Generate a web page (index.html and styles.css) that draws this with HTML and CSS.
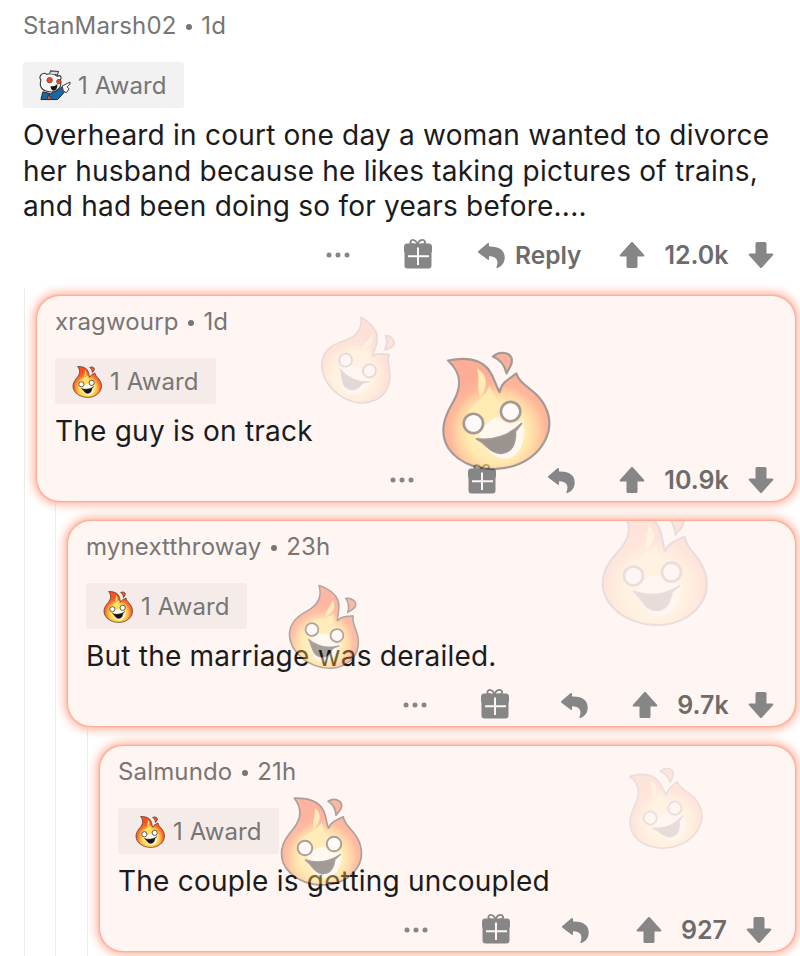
FILE: index.html
```html
<!DOCTYPE html>
<html lang="en">
<head>
<meta charset="utf-8">
<title>Comments</title>
<link rel="stylesheet" href="styles.css">
</head>
<body>
<svg class="defs" width="0" height="0" aria-hidden="true">
  <defs>
    <radialGradient id="fire" gradientUnits="userSpaceOnUse" cx="125" cy="185" r="135">
      <stop offset="0" stop-color="#fff6c0"/>
      <stop offset=".5" stop-color="#ffdc58"/>
      <stop offset=".68" stop-color="#ffa63c"/>
      <stop offset=".8" stop-color="#ff6a2c"/>
      <stop offset="1" stop-color="#fb5120"/>
    </radialGradient>
    <g id="flame">
      <path d="M43 4C82 3 117 13 131 42C141 63 139 78 146 95C153 76 170 70 191 60C193 82 214 95 230 119C251 151 251 189 233 215C211 250 170 268 128 267C78 267 28 243 9 200C-6 159 14 127 38 99C63 69 70 39 43 4Z" fill="url(#fire)" stroke="#2b211c" stroke-width="5" stroke-linejoin="round"/>
      <path d="M105 34C128 52 122 78 101 98C96 76 107 58 105 34ZM59 139C78 105 116 103 126 75C130 102 141 113 149 130L123 172Z" fill="#ffdf62"/>
      <path d="M84 178Q118 146 134 151Q150 181 188 166Q187 234 143 247Q95 248 84 178Z" fill="#fffdf0"/>
      <path d="M145 13C163 2 188 10 186 29C184 42 174 47 169 56C168 37 161 23 145 13Z" fill="#fa5a30" stroke="#2b211c" stroke-width="5" stroke-linejoin="round"/>
      <circle cx="75" cy="155" r="22" fill="#fff" stroke="#2b211c" stroke-width="6"/>
      <circle cx="163" cy="143" r="22" fill="#fff" stroke="#2b211c" stroke-width="6"/>
      <path d="M76 191C112 202 151 197 183 174L166 189C162 214 154 234 126 233C101 230 94 202 76 191Z" fill="#171310" stroke="#2b211c" stroke-width="4" stroke-linejoin="round"/>
    </g>
    <symbol id="dots" viewBox="0 0 24 6"><circle cx="3" cy="3" r="2.5"/><circle cx="12" cy="3" r="2.5"/><circle cx="21" cy="3" r="2.5"/></symbol>
    <symbol id="gift" viewBox="0 0 30 32">
      <path d="M14.500 7C9 7 6.500 5.800 7.500 3.500C9 .8 13.500 1.500 14.500 7C15.500 1.500 20.500 .8 22 3.500C23 5.800 20 7 14.500 7Z" fill="none" stroke="currentColor" stroke-width="1.700"/>
      <path d="M4 5.500H26Q29 5.500 29 9V12.500Q29 14 28.500 15V27.500Q28.500 30.500 25.500 30.500H4.500Q1.500 30.500 1.500 27.500V15Q1 14 1 12.500V9Q1 5.500 4 5.500Z"/>
      <path d="M15 9.500V27M5 18.300H26" stroke="var(--surface)" stroke-width="2"/>
    </symbol>
    <symbol id="reply" viewBox="0 0 29 27"><path d="M1.400 9.100L10.500 1.300Q12 .3 12 2.100V4.600C23 4.300 28 9 27.700 16C27.500 21 24.500 24.500 20.500 26C19.700 26.300 19.200 25.800 19.500 25C22 18.500 19.500 14.300 12 14.300V16.800Q12 18.700 10.500 17.600L1.400 10.700Q.5 9.900 1.400 9.100Z"/></symbol>
    <symbol id="up" viewBox="0 0 26 28"><path d="M12.200 1.300Q13 .5 13.800 1.300L25 13.700Q26 15.500 24 15.500H18.500V25.500Q18.500 27 17 27H9Q7.500 27 7.500 25.500V15.500H2Q0 15.500 1 13.700Z"/></symbol>
  </defs>
</svg>

<main class="thread">
  <article class="comment root">
    <header class="meta">StanMarsh02 <i class="sep"></i> 1d</header>
    <div class="award">
      <svg class="award-icon" viewBox="0 0 34 32">
        <path d="M3 31L5 23L13 25L22 20L26 17L29 21L24 27L20 31Z" fill="#1769a9" stroke="#252423"/>
        <path d="M9 30.500L11 26L14 30" fill="#e7552a" stroke="#252423" stroke-width=".8"/>
        <path d="M9 5C5 2 0 7 3 11C1 18 4 22 12 23C20 24 25 18 23 11C25 8 23 5 20 7Q15 3 9 5Z" fill="#f8f6f4" stroke="#353535" stroke-width="1.100"/>
        <path d="M12 4L13 1.500L21 2L20 6L17 5" fill="#ddd" stroke="#454545" stroke-width="1.100"/>
        <circle cx="12" cy="11" r="2.800" fill="#ec4a20" stroke="#6a4034" stroke-width=".8"/>
        <circle cx="21.500" cy="12.500" r="2.300" fill="#ec4a20" stroke="#6a4034" stroke-width=".8"/>
        <path d="M13 17Q17 18 20 15Q20 22 16 22Q13 21 13 17Z" fill="#181818"/>
        <path d="M25 17L33 13L33 15L30 18L32 20L29 24L26 22Z" fill="#fff" stroke="#353535"/>
      </svg>
      <span>1 Award</span>
    </div>
    <p class="text">Overheard in court one day a woman wanted to divorce<br>her husband because he likes taking pictures of trains,<br>and had been doing so for years before....</p>
    <footer class="actions">
      <svg class="dots"><use href="#dots"/></svg>
      <svg class="gift"><use href="#gift"/></svg>
      <span class="reply"><svg class="reply-icon"><use href="#reply"/></svg><span class="reply-label">Reply</span></span>
      <span class="votes"><svg class="arrow"><use href="#up"/></svg><b>12.0k</b><svg class="arrow down"><use href="#up"/></svg></span>
    </footer>
  </article>

  <div class="replies">
    <article class="comment glow">
      <header class="meta">xragwourp <i class="sep"></i> 1d</header>
      <div class="award"><svg class="award-icon fire" viewBox="-3 0 252 272"><use href="#flame"/></svg><span>1 Award</span></div>
      <p class="text">The guy is on track</p>
      <footer class="actions">
        <svg class="dots"><use href="#dots"/></svg>
        <svg class="gift"><use href="#gift"/></svg>
        <span class="reply"><svg class="reply-icon"><use href="#reply"/></svg></span>
        <span class="votes"><svg class="arrow"><use href="#up"/></svg><b>10.9k</b><svg class="arrow down"><use href="#up"/></svg></span>
      </footer>
      <svg class="flames">
        <use href="#flame" opacity=".12" transform="translate(320.500 69.500) rotate(32) scale(.295) translate(-119 -149)"/>
        <use href="#flame" opacity=".43" transform="translate(455 121.500) rotate(-10) scale(.44) translate(-119 -149)"/>
      </svg>
    </article>

    <div class="replies">
      <article class="comment glow">
        <header class="meta">mynextthroway <i class="sep"></i> 23h</header>
        <div class="award"><svg class="award-icon fire" viewBox="-3 0 252 272"><use href="#flame"/></svg><span>1 Award</span></div>
        <p class="text">But the marriage was derailed.</p>
        <footer class="actions">
          <svg class="dots"><use href="#dots"/></svg>
          <svg class="gift"><use href="#gift"/></svg>
          <span class="reply"><svg class="reply-icon"><use href="#reply"/></svg></span>
          <span class="votes"><svg class="arrow"><use href="#up"/></svg><b class="short">9.7k</b><svg class="arrow down"><use href="#up"/></svg></span>
        </footer>
        <svg class="flames">
          <use href="#flame" opacity=".38" transform="translate(256.500 111.500) rotate(21) scale(.29) translate(-119 -149)"/>
          <use href="#flame" opacity=".1" transform="translate(584.500 53) rotate(2) scale(.43) translate(-119 -149)"/>
        </svg>
      </article>

      <div class="replies">
        <article class="comment glow">
          <header class="meta">Salmundo <i class="sep"></i> 21h</header>
          <div class="award"><svg class="award-icon fire" viewBox="-3 0 252 272"><use href="#flame"/></svg><span>1 Award</span></div>
          <p class="text">The couple is getting uncoupled</p>
          <footer class="actions last">
            <svg class="dots"><use href="#dots"/></svg>
            <svg class="gift"><use href="#gift"/></svg>
            <span class="reply"><svg class="reply-icon"><use href="#reply"/></svg></span>
            <span class="votes"><svg class="arrow"><use href="#up"/></svg><b class="shorter">927</b><svg class="arrow down"><use href="#up"/></svg></span>
          </footer>
          <svg class="flames">
            <use href="#flame" opacity=".4" transform="translate(219.500 100) scale(.33) translate(-119 -149)"/>
            <use href="#flame" opacity=".1" transform="translate(562.500 67) rotate(-14) scale(.3) translate(-119 -149)"/>
          </svg>
        </article>
      </div>
    </div>
  </div>
</main>
</body>
</html>
```
FILE: styles.css
```css
* { box-sizing: border-box; }

body {
  --surface: #fff;
  margin: 0;
  height: 956px;
  overflow: hidden;
  background: #fff;
  font-family: Inter, "Liberation Sans", sans-serif;
  color: #1b1b1c;
}

.defs { position: absolute; }
svg { display: block; flex: none; }

.thread { width: 800px; height: 956px; overflow: hidden; }

.comment {
  position: relative;
  display: flex;
  flex-direction: column;
  align-items: flex-start;
}

.root { height: 288px; padding: 10px 0 0 23px; }

.meta {
  height: 32px;
  line-height: 32px;
  font-size: 24px;
  letter-spacing: .15px;
  color: #777675;
  white-space: pre;
}

.sep {
  display: inline-block;
  width: 6px;
  height: 6px;
  margin: 0 2.500px 4px;
  border-radius: 50%;
  background: #777675;
}

.award {
  display: flex;
  align-items: center;
  width: 161px;
  height: 46px;
  margin-top: 20px;
  padding-left: 15px;
  gap: 7px;
  border-radius: 3px;
  background: #f2f2f2;
  color: #777675;
  font-size: 24px;
  letter-spacing: .1px;
}

.award-icon { width: 33px; height: 32px; }
.award-icon.fire { width: 30px; height: 32px; margin: 1px 1px 0 2px; }

.text {
  margin: 10px 0 0;
  font-size: 28px;
  line-height: 35.500px;
  letter-spacing: .22px;
  white-space: nowrap;
}

.actions {
  position: absolute;
  right: 26px;
  top: 238px;
  display: flex;
  align-items: center;
  height: 34px;
  color: #858685;
  fill: #858685;
}

.dots { width: 24px; height: 6px; }
.gift { width: 30px; height: 32px; margin: -2px 44px 0 53px; }
.reply { display: flex; align-items: center; margin-right: 37px; }
.reply-icon { width: 29px; height: 27px; }
.reply-label {
  width: 67px;
  margin-left: 9px;
  font-size: 24.500px;
  font-weight: 600;
  color: #6c6c6c;
}

.votes { display: flex; align-items: center; }
.arrow { width: 26px; height: 28px; }
.down { transform: rotate(180deg); }
.votes b {
  width: 65px;
  margin: 0 19px;
  font-size: 25px;
  font-weight: 600;
  color: #6c6c6c;
  text-align: center;
  white-space: nowrap;
}
.votes .short { width: 52px; }
.votes .shorter { width: 46px; }

.replies {
  height: 700px;
  margin-left: 24px;
  border-left: 1px solid #ececec;
  padding: 8px 0 0 12px;
}

.replies .replies { margin-left: 18px; padding-top: 20px; }
.replies .replies .replies { margin-left: 19px; }

.glow {
  --surface: #fff5f2;
  height: 205px;
  margin-right: 5px;
  padding: 10px 0 0 18px;
  border-radius: 23px;
  background: #fff5f2;
  box-shadow: 0 0 2px .5px #ffa58c, 0 0 10px 4px #ffb8a4;
}

.glow .award { background: #f5ece9; }
.glow .actions { right: 21px; top: 167px; }
.glow .gift { margin-right: 50px; }
.glow .reply { margin-right: 43px; }
.glow .actions.last { right: 23px; }
.glow .last .reply { margin-right: 46px; }

.flames {
  position: absolute;
  inset: 0;
  width: 100%;
  height: 100%;
  overflow: hidden;
}
```
